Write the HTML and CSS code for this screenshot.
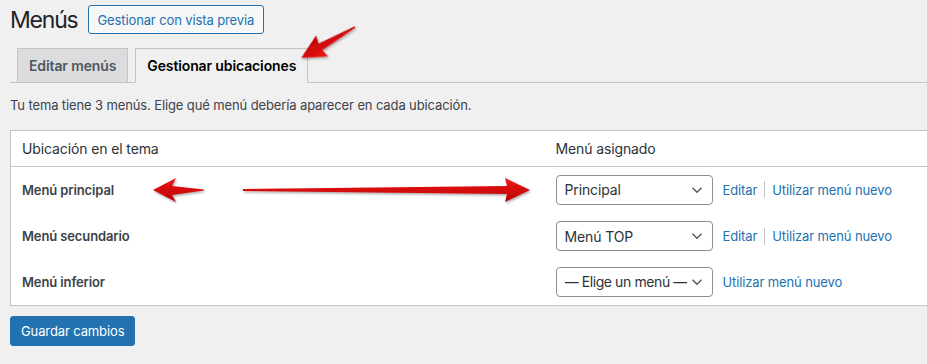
FILE: index.html
```html
<!DOCTYPE html>
<html lang="es">
  <head>
    <meta charset="UTF-8" />
    <meta name="viewport" content="width=device-width, initial-scale=1.0" />
    <title>Menús</title>
    <link rel="stylesheet" href="styles.css">
  </head>
  <body>
    <div class="wrap">
      <div class="page-head">
        <h1>Menús</h1>
        <a class="btn-outline" href="#">Gestionar con vista previa</a>
      </div>

      <nav class="tabs">
        <a class="tab" href="#">Editar menús</a>
        <a class="tab active" href="#">Gestionar ubicaciones</a>
      </nav>

      <p class="intro">Tu tema tiene 3 menús. Elige qué menú debería aparecer en cada ubicación.</p>

      <table class="locations">
        <thead>
          <tr>
            <th class="col-loc">Ubicación en el tema</th>
            <th>Menú asignado</th>
          </tr>
        </thead>
        <tbody>
          <tr>
            <td class="loc-name">Menú principal</td>
            <td>
              <div class="assign">
                <div class="select">
                  <span>Principal</span>
                  <svg width="12" height="8" viewBox="0 0 12 8"><path d="M1.5 1.8 6 6.2l4.5-4.4" fill="none" stroke="#50575e" stroke-width="1.4"/></svg>
                </div>
                <a href="#">Editar</a>
                <span class="sep"></span>
                <a href="#">Utilizar menú nuevo</a>
              </div>
            </td>
          </tr>
          <tr>
            <td class="loc-name">Menú secundario</td>
            <td>
              <div class="assign">
                <div class="select">
                  <span>Menú TOP</span>
                  <svg width="12" height="8" viewBox="0 0 12 8"><path d="M1.5 1.8 6 6.2l4.5-4.4" fill="none" stroke="#50575e" stroke-width="1.4"/></svg>
                </div>
                <a href="#">Editar</a>
                <span class="sep"></span>
                <a href="#">Utilizar menú nuevo</a>
              </div>
            </td>
          </tr>
          <tr>
            <td class="loc-name">Menú inferior</td>
            <td>
              <div class="assign">
                <div class="select">
                  <span class="tight">— Elige un menú —</span>
                  <svg width="12" height="8" viewBox="0 0 12 8"><path d="M1.5 1.8 6 6.2l4.5-4.4" fill="none" stroke="#50575e" stroke-width="1.4"/></svg>
                </div>
                <a href="#">Utilizar menú nuevo</a>
              </div>
            </td>
          </tr>
        </tbody>
      </table>

      <button class="btn-primary">Guardar cambios</button>
    </div>

    <!-- flechas rojas de anotación -->
    <svg class="arrows" width="927" height="364" viewBox="0 0 927 364">
      <defs>
        <linearGradient id="red" x1="0" y1="0" x2="0" y2="1">
          <stop offset="0" stop-color="#f01818" />
          <stop offset="1" stop-color="#b80000" />
        </linearGradient>
        <filter id="shadow" x="-20%" y="-50%" width="140%" height="200%">
          <feDropShadow dx="1" dy="1.5" stdDeviation="1.2" flood-color="#000" flood-opacity="0.35" />
        </filter>
      </defs>
      <g fill="url(#red)" filter="url(#shadow)">
        <!-- larga, hacia la derecha -->
        <path d="M243 189 L507 186 L505 178 L530 190 L505 202 L507 194 L243 191 Z" />
        <!-- corta, hacia la izquierda -->
        <path d="M204 189.5 L172 186 L176 178 L153 190 L176 202 L172 195 L204 190.5 Z" />
        <!-- arriba, hacia la pestaña -->
        <g transform="translate(355 27) rotate(150.1)">
          <path d="M0 -0.8 L40 -3.8 L38 -12 L62 0 L38 12 L40 3.8 L0 0.8 Z" />
        </g>
      </g>
    </svg>
  </body>
</html>
```

FILE: styles.css
```css
body {
  margin: 0;
  background: #f0f0f1;
  color: #3c434a;
  font-family: Inter, "Noto Sans", sans-serif;
  font-size: 13px;
  letter-spacing: -0.12px;
  overflow: hidden;
}

.wrap {
  padding-left: 10px;
}

.page-head {
  display: flex;
  align-items: center;
  gap: 10px;
  padding-top: 5px;
  height: 29px;
}

h1 {
  margin: 0;
  font-size: 23px;
  font-weight: 400;
  letter-spacing: -1.2px;
  color: #1d2327;
}

.btn-outline {
  display: inline-flex;
  align-items: center;
  height: 27px;
  padding: 0 9px;
  border: 1px solid #2271b1;
  border-radius: 3px;
  background: #f6f7f7;
  color: #2271b1;
  font-size: 13px;
  text-decoration: none;
}

.tabs {
  display: flex;
  gap: 7px;
  margin-top: 14px;
  padding-left: 7px;
  border-bottom: 1px solid #c3c4c7;
}

.tab {
  display: block;
  height: 33px;
  line-height: 33px;
  padding: 0 11px;
  margin-bottom: -1px;
  border: 1px solid #c3c4c7;
  background: #dcdcde;
  color: #50575e;
  font-size: 14px;
  font-weight: 600;
  text-decoration: none;
}

.tab.active {
  background: #f0f0f1;
  color: #000;
  border-bottom-color: #f0f0f1;
}

.intro {
  margin: 13px 0 14px;
  color: #3c434a;
  line-height: 1.5;
}

.locations {
  width: calc(100% + 10px);
  table-layout: fixed;
  border-collapse: collapse;
  background: #fff;
  border: 1px solid #c3c4c7;
}

.locations th {
  text-align: left;
  font-size: 14px;
  font-weight: 400;
  color: #2c3338;
  height: 36px;
  padding: 0 11px;
  box-sizing: border-box;
  border-bottom: 1px solid #c3c4c7;
}

.locations .col-loc {
  width: 534px;
}

.locations td {
  height: 46px;
  padding: 0 11px;
  box-sizing: border-box;
}

.locations tbody tr:first-child td {
  height: 47px;
}

.loc-name {
  font-weight: 600;
  color: #3c434a;
}

.assign {
  display: flex;
  align-items: center;
  gap: 10px;
}

.select {
  display: flex;
  align-items: center;
  justify-content: space-between;
  gap: 2px;
  box-sizing: border-box;
  width: 157px;
  height: 30px;
  padding: 0 9px 0 8px;
  border: 1px solid #8c8f94;
  border-radius: 4px;
  background: #fff;
  color: #2c3338;
  font-size: 14px;
  white-space: nowrap;
}

.select span {
  overflow: hidden;
}

.select .tight {
  letter-spacing: -0.4px;
}

.select svg {
  flex: none;
}

.assign a {
  color: #2271b1;
  text-decoration: none;
  white-space: nowrap;
}

.sep {
  width: 1px;
  height: 17px;
  margin: 0 -3px;
  background: #c3c4c7;
}

.btn-primary {
  margin-top: 10px;
  height: 30px;
  padding: 0 10px;
  border: 1px solid #2271b1;
  border-radius: 3px;
  background: #2271b1;
  color: #fff;
  font-family: inherit;
  font-size: 13px;
  letter-spacing: inherit;
}

.arrows {
  position: absolute;
  top: 0;
  left: 0;
  pointer-events: none;
}
```
